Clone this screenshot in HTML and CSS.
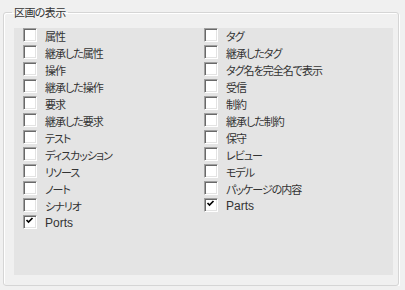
FILE: index.html
```html
<!DOCTYPE html>
<html>
  <head>
    <title>区画の表示</title>
    <link rel="stylesheet" href="styles.css">
  </head>
  <body>
    <fieldset class="group">
      <legend class="group-title">区画の表示</legend>
      <div class="panel">
        <div class="column">
          <label class="row"><span class="box"></span><span class="label">属性</span></label>
          <label class="row"><span class="box"></span><span class="label">継承した属性</span></label>
          <label class="row"><span class="box"></span><span class="label">操作</span></label>
          <label class="row"><span class="box"></span><span class="label">継承した操作</span></label>
          <label class="row"><span class="box"></span><span class="label">要求</span></label>
          <label class="row"><span class="box"></span><span class="label">継承した要求</span></label>
          <label class="row"><span class="box"></span><span class="label">テスト</span></label>
          <label class="row"><span class="box"></span><span class="label">ディスカッション</span></label>
          <label class="row"><span class="box"></span><span class="label">リソース</span></label>
          <label class="row"><span class="box"></span><span class="label">ノート</span></label>
          <label class="row"><span class="box"></span><span class="label">シナリオ</span></label>
          <label class="row">
            <span class="box"><svg width="11" height="11" viewBox="0 0 11 11"><polyline points="1.5,3 3.5,5 7.5,1" fill="none" stroke="#000" stroke-width="1.7"/></svg></span>
            <span class="label latin">Ports</span>
          </label>
        </div>
        <div class="column">
          <label class="row"><span class="box"></span><span class="label">タグ</span></label>
          <label class="row"><span class="box"></span><span class="label">継承したタグ</span></label>
          <label class="row"><span class="box"></span><span class="label">タグ名を完全名で表示</span></label>
          <label class="row"><span class="box"></span><span class="label">受信</span></label>
          <label class="row"><span class="box"></span><span class="label">制約</span></label>
          <label class="row"><span class="box"></span><span class="label">継承した制約</span></label>
          <label class="row"><span class="box"></span><span class="label">保守</span></label>
          <label class="row"><span class="box"></span><span class="label">レビュー</span></label>
          <label class="row"><span class="box"></span><span class="label">モデル</span></label>
          <label class="row"><span class="box"></span><span class="label">パッケージの内容</span></label>
          <label class="row">
            <span class="box"><svg width="11" height="11" viewBox="0 0 11 11"><polyline points="1.5,3 3.5,5 7.5,1" fill="none" stroke="#000" stroke-width="1.7"/></svg></span>
            <span class="label latin">Parts</span>
          </label>
        </div>
      </div>
    </fieldset>
  </body>
</html>
```

FILE: styles.css
```css
body {
  margin: 0;
  padding: 5px 0 0 3px;
  background-color: #f0f0f0;
  color: #333;
  font-family: "Noto Sans CJK JP", sans-serif;
  font-size: 11px;
  font-feature-settings: "palt";
}

.group {
  box-sizing: border-box;
  width: 396px;
  height: 281px;
  margin: 0;
  padding: 0 5px 9px 10px;
  border: 1px solid #d5d5d5;
  border-radius: 3px;
  box-shadow: inset 1px 1px #fff, 1px 1px #fff;
}

.group-title {
  margin-left: -2px;
  padding: 0 2px;
  line-height: 14px;
  letter-spacing: -0.6px;
}

.panel {
  display: flex;
  margin-top: 9px;
  height: 247px;
  padding-left: 9px;
  background-color: #e4e4e4;
}

.column {
  display: flex;
  flex-direction: column;
  width: 181px;
}

.row {
  display: flex;
  align-items: flex-start;
  height: 17px;
}

.box {
  box-sizing: border-box;
  width: 14px;
  height: 14px;
  padding: 1px;
  background-color: #fff;
  border: 1px solid;
  border-color: #a0a0a0 #fff #fff #a0a0a0;
  box-shadow: inset 1px 1px #696969, inset -1px -1px #e3e3e3;
}

.box svg {
  display: block;
}

.label {
  margin-left: 8px;
  line-height: 17px;
  letter-spacing: -1px;
}

.latin {
  font-family: "Liberation Sans", sans-serif;
  font-size: 12px;
  letter-spacing: 0;
}
```
